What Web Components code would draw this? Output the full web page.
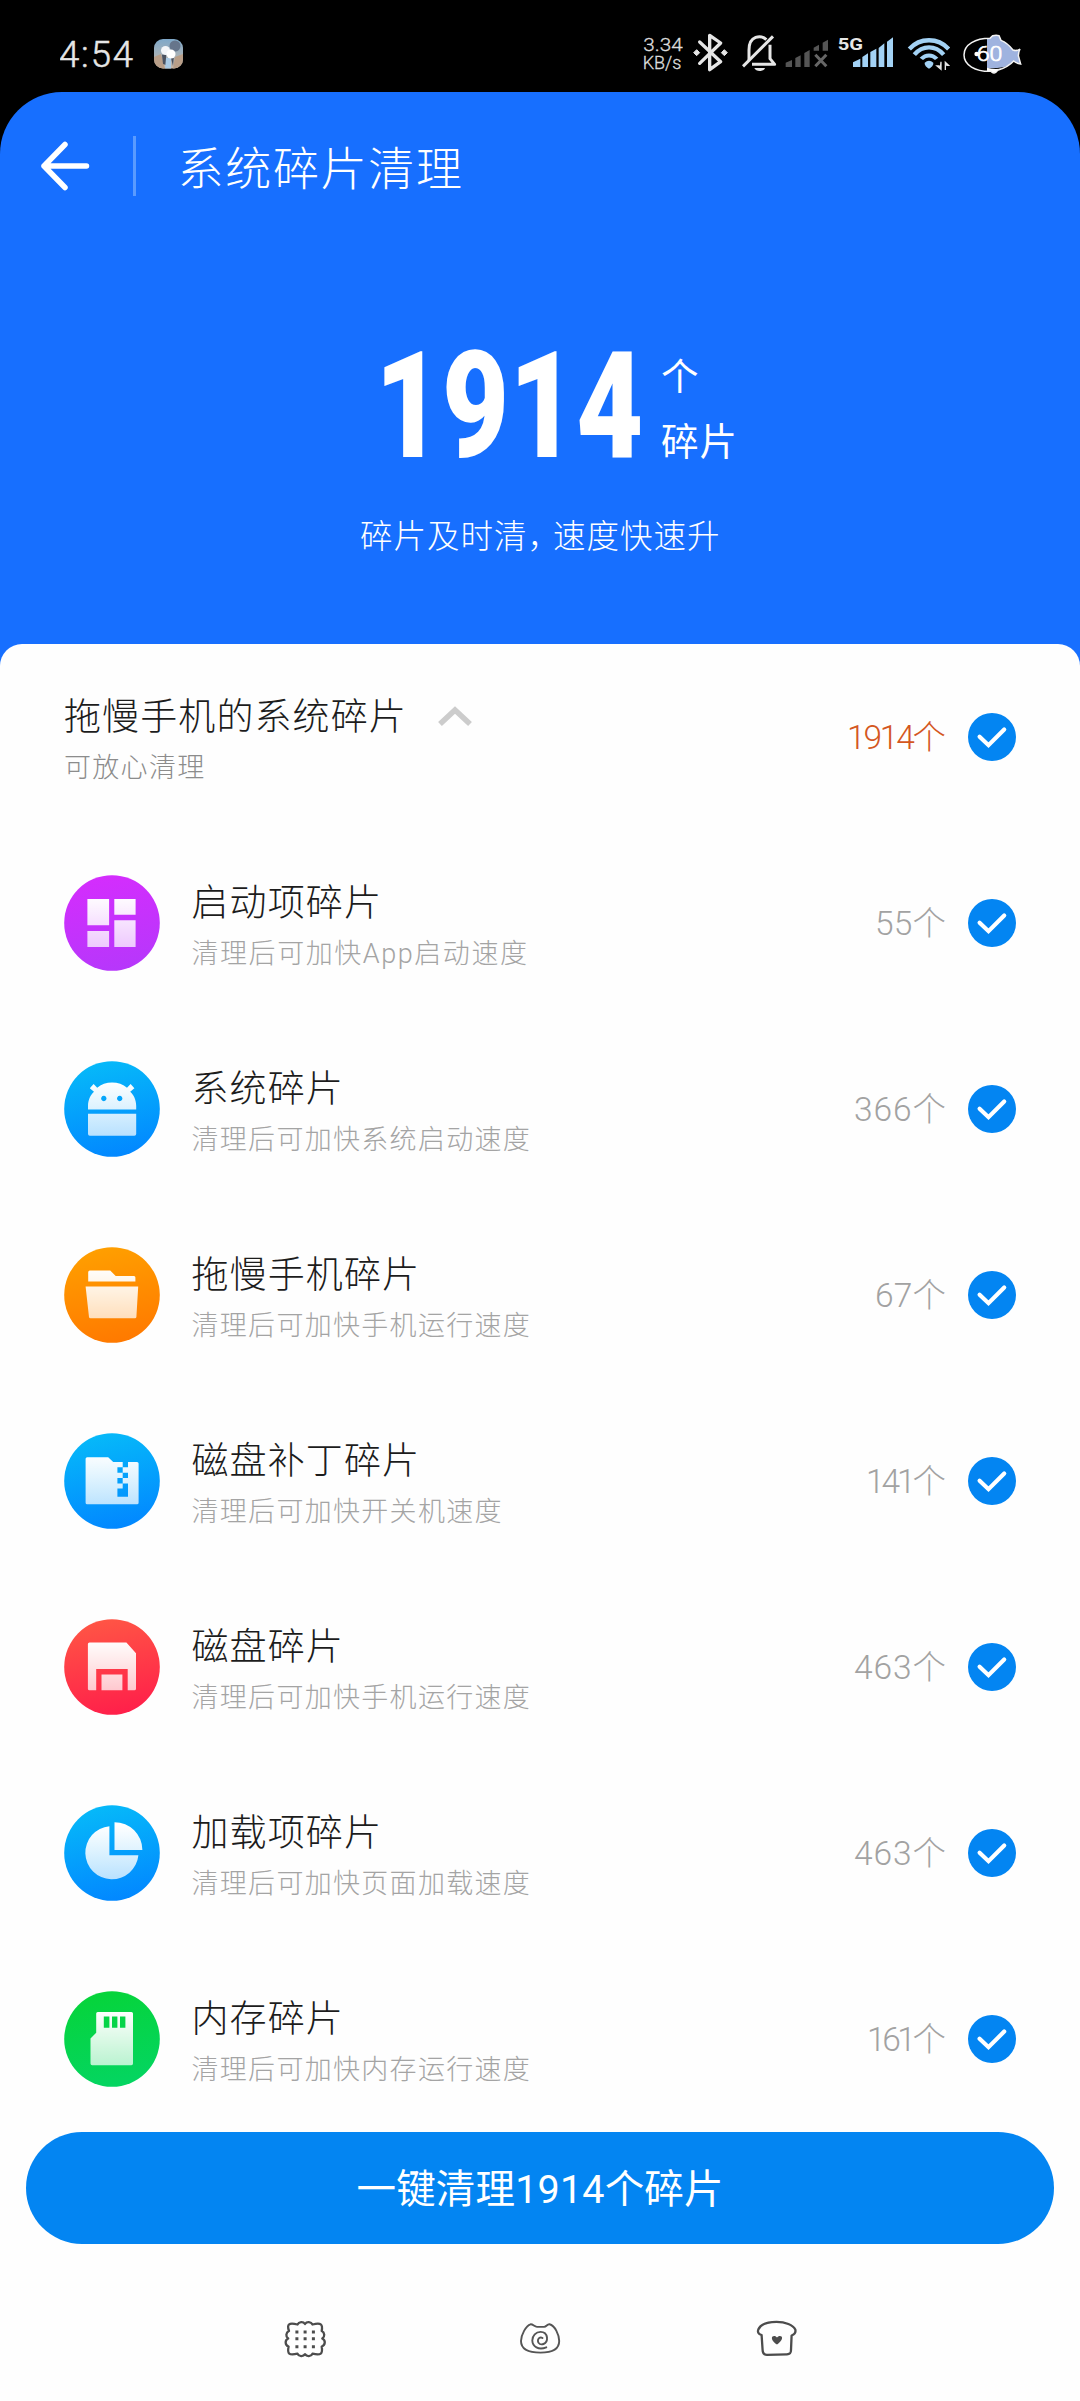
<!DOCTYPE html>
<html lang="zh-CN">
<head>
<meta charset="utf-8">
<title>系统碎片清理</title>
<style>
body{margin:0;background:#000;font-family:Roboto,"Noto Sans CJK SC",sans-serif;font-weight:300}
</style>
</head>
<body>
<cleaner-screen></cleaner-screen>
<script>
const define = (name, html, setup) => customElements.define(name, class extends HTMLElement {
  connectedCallback() {
    if (this.shadowRoot) return;
    const root = this.attachShadow({ mode: 'open' });
    const t = document.createElement('template');
    t.innerHTML = html;
    root.append(t.content.cloneNode(true));
    if (setup) setup.call(this, root);
  }
});

/* One line of text whose tracking is adjusted so that it takes the given width. */
define('fit-text', `<style>:host{display:block;white-space:nowrap}span{display:inline-block}</style><span></span>`, function (root) {
  const s = root.querySelector('span');
  s.textContent = this.getAttribute('text');
  const w = +this.getAttribute('w');
  if (w) {
    const n = [...s.textContent].length;
    const ls = (w - s.getBoundingClientRect().width) / (n - 1);
    s.style.letterSpacing = ls + 'px';
    s.style.marginRight = -ls + 'px';
  }
});

const G = '<linearGradient id="w" x1="0" y1="20" x2="0" y2="75" gradientUnits="userSpaceOnUse"><stop stop-color="#fff"/><stop offset="1" stop-color="#fff" stop-opacity=".72"/></linearGradient>';
const GLYPHS = {
  apps: ['#d42dfd', '#b637fb', '<path d="M23.4 24H45.1V50.3H23.4ZM50.3 24H71.6V39.7H50.3ZM23.4 56H45.1V72H23.4ZM50.3 45.3H71.6V72H50.3Z"/>'],
  robot: ['#06b9f9', '#0287ff', '<path fill-rule="evenodd" d="M24 48.4V45C24 39 26.500 34 30 30.800L25.800 27.200 29.600 23.100 33.200 26.800C37 23.300 42.500 21.600 48.100 21.600S59.200 23.300 63 26.800L66.600 23.100 70.400 27.200 66.200 30.800C69.800 34 72.200 39 72.200 45V48.400ZM39.800 34.800A2.700 2.700 0 1 0 39.801 34.800ZM55.700 34.800A2.700 2.700 0 1 0 55.701 34.800Z"/><path d="M24 52.800H72.200V73A1.800 1.800 0 0 1 70.400 74.700H25.800A1.800 1.800 0 0 1 24 73Z"/>'],
  folder: ['#ff9f00', '#ff7900', '<path d="M24.200 34.500V25.200A1.700 1.700 0 0 1 25.900 23.500H46.200L51.700 28.900H70A1.500 1.500 0 0 1 71.400 30.400V34.500ZM21.600 39.500H74.200L72.400 70A1.500 1.500 0 0 1 71 71.300H26.600A1.500 1.500 0 0 1 25 70Z"/>'],
  zip: ['#06b9f9', '#0287ff', '<path d="M23.200 24.200H44.200L49.200 28.900H58.700V34.200H53.400V39.800H58.700V45.100H53.400V50.400H58.700V55.400H53.400V63.700H64V50.400H58.700V45.100H64V39.800H58.700V34.200H64V28.900H73A1.600 1.600 0 0 1 74.600 30.500V69.700A1.600 1.600 0 0 1 73 71.300H23.200A1.600 1.600 0 0 1 21.600 69.700V25.800A1.600 1.600 0 0 1 23.200 24.200Z"/>'],
  disk: ['#ff5545', '#ff1f4a', '<path d="M25.500 23.500H62.400L72 34.200V69.700A1.600 1.600 0 0 1 70.400 71.300H63.700V50H32.200V71.300H25.500A1.600 1.600 0 0 1 23.900 69.700V25.100A1.600 1.600 0 0 1 25.500 23.500ZM37.500 55.400H58.400V71.300H37.500Z"/>'],
  pie: ['#06b9f9', '#0287ff', '<path d="M45.400 21.200A26.600 26.600 0 1 0 74.400 50.300H45.400ZM50.500 17.200A27.900 27.900 0 0 1 78.400 45H50.500Z"/>'],
  card: ['#06d43a', '#04d562', '<path fill-rule="evenodd" d="M34 20.900H67.400A1.700 1.700 0 0 1 69 22.600V72.600A1.700 1.700 0 0 1 67.400 74.300H28.200A1.700 1.700 0 0 1 26.500 72.600V47.400L32.200 41.800V22.600A1.700 1.700 0 0 1 34 20.900ZM39.800 25.500V36.800H45.400V25.500ZM48 25.500V36.800H53.400V25.500ZM56 25.500V36.800H61.400V25.500Z"/>']
};
define('item-icon', `<style>:host,svg{display:block;width:96px;height:96px}</style>`, function (root) {
  const [a, b, p] = GLYPHS[this.getAttribute('kind')];
  const d = document.createElement('div');
  d.innerHTML = `<svg viewBox="0 0 96 96"><defs><linearGradient id="b" x1=".4" y1="0" x2=".6" y2="1"><stop stop-color="${a}"/><stop offset="1" stop-color="${b}"/></linearGradient>${G}</defs><circle cx="48" cy="48" r="47.800" fill="url(#b)"/><g fill="url(#w)">${p}</g></svg>`;
  root.append(d.firstChild);
});

define('check-mark', `<style>:host,svg{display:block;width:48px;height:48px}</style>
<svg viewBox="0 0 48 48"><circle cx="24" cy="24" r="24" fill="#0385f2"/><path d="M11.600 23.800 20.500 32.200 36.200 16.600" fill="none" stroke="#fff" stroke-width="4.200" stroke-linecap="round"/></svg>`);

const rowTag = (kind, label, note, count, w) =>
  `<count-row kind="${kind}" label="${label}" note="${note}" count="${count}" w="${w}"></count-row>`;
customElements.define('count-row', class extends HTMLElement {
  connectedCallback() {
    if (this.shadowRoot) return;
    const g = n => this.getAttribute(n);
    const root = this.attachShadow({ mode: 'open' });
    const head = g('kind') === 'group';
    root.innerHTML = `<style>
:host{display:flex;align-items:center;height:186px;padding:0 64px;box-sizing:border-box}
item-icon{margin-right:31.500px}
.text{flex:1;padding-top:11px}
.title{display:flex;align-items:center;gap:31px;height:51px;line-height:51px;font-size:37px;letter-spacing:1.100px;color:#1c1c1c;white-space:nowrap}
.title svg{display:block;margin-top:-3px}
.sub{height:50px;line-height:50px;font-size:27px;letter-spacing:${/App/.test(g('note')) ? 1.55 : 1.3}px;color:${head ? '#8c8c8c' : '#a4a4a4'};white-space:nowrap}
fit-text{font-size:33.500px;line-height:50px;color:${head ? '#d4571f' : '#a2a2a2'};margin:2px 22px 0 0}
</style>
${head ? '' : `<item-icon kind="${g('kind')}"></item-icon>`}
<div class="text"><div class="title"><span>${g('label')}</span>${head ? '<svg width="34" height="20" viewBox="0 0 34 20"><path d="M2 18 17 4 32 18" fill="none" stroke="#ccc" stroke-width="5.500"/></svg>' : ''}</div><div class="sub">${g('note')}</div></div>
<fit-text text="${g('count')}" w="${g('w')}"></fit-text><check-mark></check-mark>`;
  }
});

define('status-bar', `<style>
:host{display:flex;height:92px;box-sizing:border-box;padding:10px 58px 0 60px;background:#000;overflow:hidden}
svg{display:block;height:82px;flex:none}
.time{width:76px;height:82px}
.gap{flex:1}
text{font-family:Roboto,sans-serif}
</style>
<svg class="time" viewBox="0 0 76 82"><text x="-1" y="56.500" font-size="36.500" font-weight="300" fill="#e6e6e6" stroke="#e6e6e6" stroke-width=".5" textLength="74">4:54</text></svg>
<svg style="margin-left:18px" width="29" viewBox="0 0 29 82"><defs><clipPath id="c"><rect y="29" width="29" height="29.500" rx="9"/></clipPath><linearGradient id="s" x2="0" y2="1"><stop stop-color="#7ea8c9"/><stop offset="1" stop-color="#c9b8a8"/></linearGradient></defs>
<g clip-path="url(#c)"><rect y="29" width="29" height="30" fill="url(#s)"/><path d="M0 47 7 44 11 59H0ZM21 47 29 44V59H19Z" fill="#b89e88"/><circle cx="21" cy="36" r="5.500" fill="#66758b"/><path d="M8 45 12 43 12 55 9 54ZM17 48 20 45 19 56Z" fill="#4b5260"/><path d="M12 48H17V59H11Z" fill="#a8c9e4"/><circle cx="11.500" cy="40.500" r="4.500" fill="#f3f5f8"/><circle cx="17" cy="44" r="4.500" fill="#fff"/></g></svg>
<div class="gap"></div>
<svg width="40" viewBox="74 0 120 246"><g fill="#ddd" font-size="56" font-weight="300" stroke="#ddd" stroke-width="1"><text x="75" y="122" textLength="118" lengthAdjust="spacingAndGlyphs">3.34</text><text x="73" y="178" textLength="116" lengthAdjust="spacingAndGlyphs">KB/s</text></g></svg>
<svg style="margin-left:10px" width="35" viewBox="223 0 105 246"><path d="M243 96 306 155 273 179V76L306 99 243 160" fill="none" stroke="#e6e6e6" stroke-width="10" stroke-linejoin="round" stroke-linecap="round"/><path d="M234 119 243 128 234 137 225 128ZM317 119 326 128 317 137 308 128Z" fill="#e6e6e6" stroke="#e6e6e6" stroke-width="3" stroke-linejoin="round"/></svg>
<svg style="margin-left:14px" width="35" viewBox="369 0 105 246"><g fill="none" stroke="#e6e6e6" stroke-width="9"><path d="M372 169 462 79"/><path d="M390 150V120C390 76 426 74 442 89M399 163H467L453 146V104" stroke-linejoin="round"/></g><path d="M406 174H438C434 186 410 186 406 174Z" fill="#e6e6e6"/></svg>
<svg style="margin-left:8px" width="44" viewBox="498 0 132 246"><path fill="#555" d="M500 171V158L519 150V171ZM529 171V144L545 136V171ZM556 171V129L572 120V171ZM584 122V113L600 104V122ZM611 122V98L627 89V122Z"/><path d="M589 134 622 169M622 134 589 169" stroke="#666" stroke-width="9"/></svg>
<svg style="margin-left:8px" width="58" viewBox="654 0 174 246"><text x="656" y="120" font-size="50" font-weight="700" fill="#e6e6e6" textLength="76" lengthAdjust="spacingAndGlyphs">5G</text><path fill="#a3d2f5" d="M702 171V157L724 146V171ZM730 171V141L747 130V171ZM754 171V126L772 116V171ZM779 171V114L796 100V171ZM804 171V95L822 82V171Z"/></svg>
<svg style="margin-left:12px" width="43" viewBox="864 0 129 246"><g fill="none" stroke="#a3d2f5" stroke-width="13"><path d="M871 117C903 82 957 82 989 117"/><path d="M886 134C911 105 949 105 974 134"/></g><path d="M902 143C918 126 942 126 958 143L948 150C936 140 924 140 912 150Z" fill="#a3d2f5"/><path d="M917 158Q930 146 943 158C944 166 936 173 930 176 924 173 916 166 917 158Z" fill="#a3d2f5"/><path d="M966 155V178L954 168H962M979 180V157L989 166H982" fill="#e6e6e6" stroke="#e6e6e6" stroke-width="4"/></svg>
<svg style="margin-left:12px" width="60" viewBox="1029 0 180 246"><path d="M1104 85H1113L1121 77Q1132 74 1140 77L1146 91C1162 97 1172 107 1182 120Q1194 124 1203 117 1198 127 1198 137L1205 162Q1192 160 1184 153C1168 171 1152 175 1104 175Z" fill="#9fb3df"/><path d="M1104 173Q1130 180 1150 174L1136 181Q1125 196 1116 184H1104Z" fill="#fff"/><path d="M1035 135C1035 103 1070 85 1113 85L1121 77Q1132 74 1140 77L1146 91C1162 97 1172 107 1182 120Q1194 124 1203 117 1198 127 1198 137L1205 162Q1192 160 1184 153C1168 171 1152 176 1136 181Q1125 196 1116 184C1068 185 1035 165 1035 135Z" fill="none" stroke="#f2f2f2" stroke-width="4.500"/><circle cx="1073" cy="132" r="7" fill="#fff"/><text x="1073" y="152" font-size="58" font-weight="300" fill="#fff" stroke="#fff" stroke-width="2" textLength="77" lengthAdjust="spacingAndGlyphs">60</text></svg>`);

define('title-bar', `<style>
:host{display:flex;align-items:center;height:148px;padding-left:41px}
svg{display:block}
i{width:2.500px;height:60px;margin:0 42px 0 43px;background:#5a9bff}
span{font-size:46px;letter-spacing:1.700px;line-height:60px;color:#fff;margin-top:5px}
</style><svg width="49" height="50" viewBox="0 0 49 50"><path d="M24 3.500 3 25 24 46.500M3 25H45.500" fill="none" stroke="#fff" stroke-width="5.500" stroke-linecap="round" stroke-linejoin="round"/></svg><i></i><span><slot></slot></span>`);

/* The large number is condensed horizontally; its layout box keeps the condensed width. */
define('hero-count', `<style>
:host{display:flex;flex-direction:column;color:#fff;padding-top:96px}
.n{display:flex;padding-left:375px;height:140px}
.big{flex:none;width:270px;height:140px}
.big span{display:inline-block;transform-origin:0 50%;font-size:149px;font-weight:900;line-height:140px;white-space:nowrap}
.u{display:flex;flex-direction:column;margin-left:16px;font-weight:400;font-size:37.500px;letter-spacing:1px;line-height:65px;padding-top:9px;white-space:nowrap}
p{margin:37px 0 0 360px;font-size:32.500px;letter-spacing:1px;line-height:48px;white-space:nowrap}
p b{font-weight:inherit;letter-spacing:-7px}
</style>
<div class="n"><div class="big"><span>1914</span></div><div class="u"><span>个</span><span>碎片</span></div></div>
<p>碎片及时清<b>，</b>速度快速升</p>`, function (root) {
  const s = root.querySelector('.big span');
  s.style.transform = `scaleX(${268 / s.offsetWidth})`;
});

define('clean-button', `<style>
:host{display:flex;justify-content:center;align-items:center;height:112px;margin:0 26px;border-radius:56px;background:#0385f2;color:#fff;font-weight:400}
fit-text{font-size:39.500px;line-height:56px;margin-top:4px}
</style><fit-text text="一键清理1914个碎片" w="367"></fit-text>`);

define('nav-bar', `<style>
:host{display:flex;height:157px;box-sizing:border-box;padding:74px 0 0 283px}
svg{display:block;flex:none;overflow:visible}
</style>
<svg width="44" height="44" viewBox="0 0 44 44" fill="none" stroke="#4c4c4c" stroke-width="2.300" stroke-linejoin="round"><path d="M6 13C3.500 6 6 4.500 14.500 6.500A4.300 4.300 0 0 1 22 6 4.300 4.300 0 0 1 29.500 6.500C38 4.500 40 6 38.700 13A4.300 4.300 0 0 1 39.300 20.500 4.300 4.300 0 0 1 38.700 28.500C40 36 38 37.500 29.500 35.700A4.300 4.300 0 0 1 22 36.200 4.300 4.300 0 0 1 14.500 35.700C6 37.500 4 36 5.600 28.500A4.300 4.300 0 0 1 5.200 20.500 4.300 4.300 0 0 1 6 13Z"/><g fill="#4c4c4c" stroke="none"><path d="M12.400 12.500h3v3h-3zM20.600 12.500h3v3h-3zM28.900 12.500h3v3h-3zM12.400 19.300h3v3h-3zM20.600 19.300h3v3h-3zM28.900 19.300h3v3h-3zM12.400 27.200h3v3h-3zM20.600 27.200h3v3h-3zM28.900 27.200h3v3h-3z"/></g></svg>
<svg style="margin-left:191px" width="44" height="44" viewBox="0 0 44 44" fill="none" stroke="#555" stroke-width="1.900" stroke-linecap="round" stroke-linejoin="round"><path d="M12.500 6.300C15 6 16.500 9 19 8.900H26C28.500 9 29 6 31.500 6.300 37 7.500 41.200 17 41.200 23 41.200 31.500 34 34.600 22.500 34.600 11 34.600 3 31.500 3 23 3 17 8 7.500 12.500 6.300Z"/><path d="M24.500 20C22 18.500 19.700 20.500 19.900 23 20 26 23 27 25.500 26 28 25 29.300 22.500 29 19.500 28.500 16 26 13.900 22.500 13.900 18 13.900 14.300 17.500 14.300 22.500 14.500 28.500 20.500 32.500 28.300 29.300"/></svg>
<svg style="margin-left:193px" width="44" height="44" viewBox="0 0 44 44" fill="none" stroke="#4c4c4c" stroke-width="2.300" stroke-linejoin="round"><path d="M6.600 17C3 16 2.500 14 3.300 11.500 5.500 6.500 13 3.900 21.500 3.900 30.500 3.900 38 7 40.300 11.500 41 14.500 39.500 16.500 36.600 17.500L36 32C36 35.500 35 36.200 32 36.300L12 36.800C8.500 36.800 7.700 35 7.600 32Z"/><path d="M22 26.500C18.500 24.500 16 21.500 17.200 18.800 18.800 17.200 21 18 22 19.500 23 18 25.500 17.300 26.800 18.800 28 21.500 25 24.500 22 26.500Z" fill="#4c4c4c" stroke="none"/></svg>`);

define('cleaner-screen', `<style>
:host{display:flex;flex-direction:column;width:1080px;height:2401px;background:#000;overflow:hidden}
.top{height:618px;margin-bottom:-66px;background:#176fff;border-radius:62px 62px 0 0;flex:none}
main{background:#fefefe;border-radius:22px 22px 0 0;flex:1}
</style>
<status-bar></status-bar>
<div class="top"><title-bar>系统碎片清理</title-bar><hero-count></hero-count></div>
<main>
${rowTag('group', '拖慢手机的系统碎片', '可放心清理', '1914个', 99)}
${rowTag('apps', '启动项碎片', '清理后可加快App启动速度', '55个', 71)}
${rowTag('robot', '系统碎片', '清理后可加快系统启动速度', '366个', 92)}
${rowTag('folder', '拖慢手机碎片', '清理后可加快手机运行速度', '67个', 71)}
${rowTag('zip', '磁盘补丁碎片', '清理后可加快开关机速度', '141个', 80)}
${rowTag('disk', '磁盘碎片', '清理后可加快手机运行速度', '463个', 92)}
${rowTag('pie', '加载项碎片', '清理后可加快页面加载速度', '463个', 92)}
${rowTag('card', '内存碎片', '清理后可加快内存运行速度', '161个', 79)}
<clean-button></clean-button>
<nav-bar></nav-bar>
</main>`);
</script>
</body>
</html>
